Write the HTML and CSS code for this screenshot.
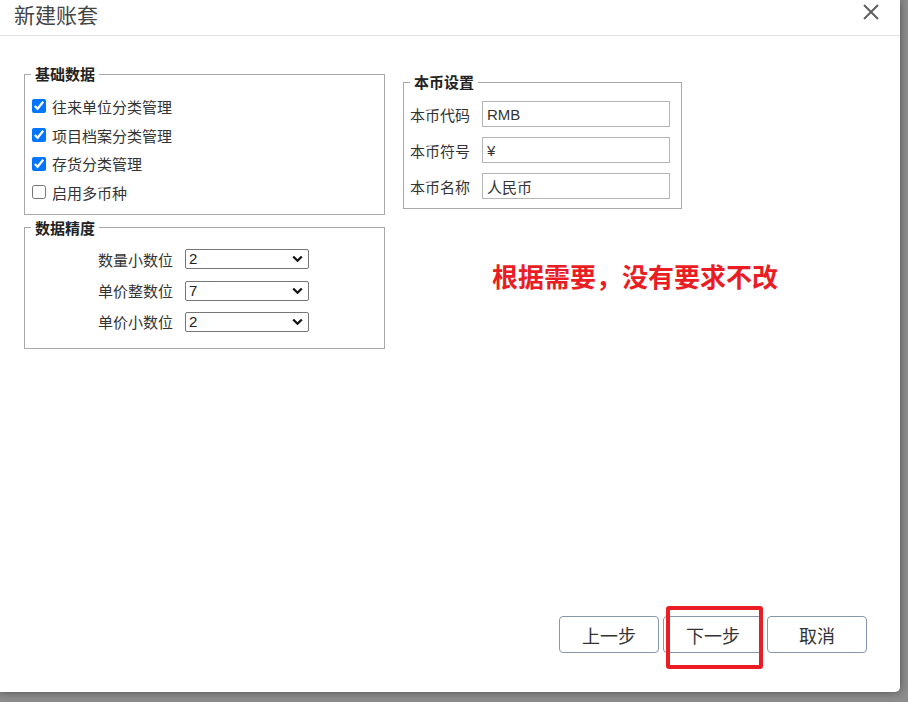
FILE: index.html
```html
<!DOCTYPE html>
<html lang="zh-CN">
<head>
<meta charset="utf-8">
<title>新建账套</title>
<link rel="stylesheet" href="styles.css">
</head>
<body>
<div class="dialog">
  <div class="header">
    <div class="title">新建账套</div>
    <svg class="close" width="18" height="18" viewBox="0 0 18 18"><path d="M2 2 L16 16 M16 2 L2 16" stroke="#5f5f5f" stroke-width="2" fill="none"/></svg>
  </div>
  <div class="body">
    <div class="col-left">
      <fieldset class="fs fs-basic">
        <legend>基础数据</legend>
        <label class="check-row"><input type="checkbox" checked><span>往来单位分类管理</span></label>
        <label class="check-row"><input type="checkbox" checked><span>项目档案分类管理</span></label>
        <label class="check-row"><input type="checkbox" checked><span>存货分类管理</span></label>
        <label class="check-row"><input type="checkbox"><span>启用多币种</span></label>
      </fieldset>
      <fieldset class="fs fs-precision">
        <legend>数据精度</legend>
        <div class="sel-row"><span class="sel-label">数量小数位</span><span class="sel-wrap"><select><option>2</option></select><svg class="chev" width="11" height="8" viewBox="0 0 11 8"><path d="M1.2 1.5 L5.5 5.8 L9.8 1.5" stroke="#111" stroke-width="2.2" fill="none"/></svg></span></div>
        <div class="sel-row"><span class="sel-label">单价整数位</span><span class="sel-wrap"><select><option>7</option></select><svg class="chev" width="11" height="8" viewBox="0 0 11 8"><path d="M1.2 1.5 L5.5 5.8 L9.8 1.5" stroke="#111" stroke-width="2.2" fill="none"/></svg></span></div>
        <div class="sel-row"><span class="sel-label">单价小数位</span><span class="sel-wrap"><select><option>2</option></select><svg class="chev" width="11" height="8" viewBox="0 0 11 8"><path d="M1.2 1.5 L5.5 5.8 L9.8 1.5" stroke="#111" stroke-width="2.2" fill="none"/></svg></span></div>
      </fieldset>
    </div>
    <div class="col-right">
      <fieldset class="fs fs-currency">
        <legend>本币设置</legend>
        <div class="in-row"><span class="in-label">本币代码</span><input type="text" value="RMB"></div>
        <div class="in-row"><span class="in-label">本币符号</span><input type="text" value="&#165;"></div>
        <div class="in-row"><span class="in-label">本币名称</span><input type="text" value="人民币"></div>
      </fieldset>
      <div class="note">根据需要，没有要求不改</div>
    </div>
  </div>
  <div class="footer">
    <button class="btn">上一步</button>
    <button class="btn btn-next">下一步<span class="mark"></span></button>
    <button class="btn">取消</button>
  </div>
</div>
</body>
</html>
```

FILE: styles.css
```css
html, body {
  margin: 0;
  padding: 0;
}
body {
  width: 908px;
  height: 702px;
  background: #8d8d8d;
  font-family: "Noto Sans CJK SC", "Liberation Sans", sans-serif;
  color: #333;
  overflow: hidden;
}
.dialog {
  width: 900px;
  height: 692px;
  background: #fff;
  border-radius: 0 0 5px 0;
  box-shadow: 0 0 8px rgba(0, 0, 0, 0.45);
  display: flex;
  flex-direction: column;
  box-sizing: border-box;
}
.header {
  height: 36px;
  box-sizing: border-box;
  border-bottom: 1px solid #e3e3e3;
  display: flex;
  justify-content: space-between;
  align-items: flex-start;
  padding: 0 20px 0 14px;
}
.title {
  font-size: 21px;
  line-height: 28px;
  color: #444;
}
.close {
  margin-top: 3px;
}
.body {
  flex: 1;
  display: flex;
  align-items: flex-start;
  padding: 28px 0 0 24px;
}
.col-left {
  width: 361px;
  display: flex;
  flex-direction: column;
}
.col-right {
  margin-left: 18px;
  margin-top: 8px;
  display: flex;
  flex-direction: column;
}
.fs {
  margin: 0;
  border: 1px solid #a9a9a9;
  min-width: 0;
  box-sizing: border-box;
}
.fs legend {
  padding: 0 4px;
  font-size: 15px;
  font-weight: bold;
  line-height: 20px;
  color: #222;
}
.fs-basic {
  padding: 8px 6px 7px 6px;
}
.check-row {
  display: flex;
  align-items: center;
  height: 28.7px;
  font-size: 15px;
}
.check-row input {
  width: 14px;
  height: 14px;
  margin: 0 6px 0 1px;
  accent-color: #0075ff;
}
.fs-precision {
  margin-top: 3px;
  padding: 6px 6px 10px 6px;
}
.sel-row {
  display: flex;
  align-items: center;
  height: 31.3px;
}
.sel-label {
  width: 142px;
  text-align: right;
  font-size: 15px;
  margin-right: 12px;
}
.sel-wrap {
  position: relative;
  display: flex;
}
.sel-wrap select {
  appearance: none;
  -webkit-appearance: none;
  width: 124px;
  height: 20px;
  font-family: "Liberation Sans", sans-serif;
  font-size: 15px;
  line-height: 18px;
  color: #222;
  padding: 0 3px;
  border: 1px solid #767676;
  border-radius: 2px;
  background: #fff;
  margin: 0;
}
.chev {
  position: absolute;
  right: 6px;
  top: 6px;
  pointer-events: none;
}
.fs-currency {
  width: 279px;
  padding: 4px 11px 4px 6px;
}
.in-row {
  display: flex;
  align-items: center;
  justify-content: space-between;
  height: 36px;
}
.in-label {
  font-size: 15px;
}
.in-row input {
  width: 188px;
  height: 26px;
  box-sizing: border-box;
  border: 1px solid #b5b5b5;
  padding: 0 4px;
  font-family: "Liberation Sans", "Noto Sans CJK SC", sans-serif;
  font-size: 15px;
  color: #333;
  margin: 0;
}
.note {
  margin-top: 51px;
  margin-left: 89px;
  font-size: 26px;
  line-height: 32px;
  font-weight: bold;
  color: #ea1d25;
  white-space: nowrap;
}
.footer {
  display: flex;
  justify-content: flex-end;
  gap: 4px;
  padding: 0 33px 39px 0;
}
.btn {
  width: 100px;
  height: 37px;
  border: 1px solid #8797ad;
  border-radius: 4px;
  background: #fff;
  font-family: "Noto Sans CJK SC", sans-serif;
  font-size: 18px;
  color: #333;
  padding: 0;
}
.btn-next {
  position: relative;
}
.mark {
  position: absolute;
  left: 2px;
  top: -11px;
  width: 97px;
  height: 63px;
  box-sizing: border-box;
  border: 4px solid #ec1c24;
  border-radius: 3px;
}
```
